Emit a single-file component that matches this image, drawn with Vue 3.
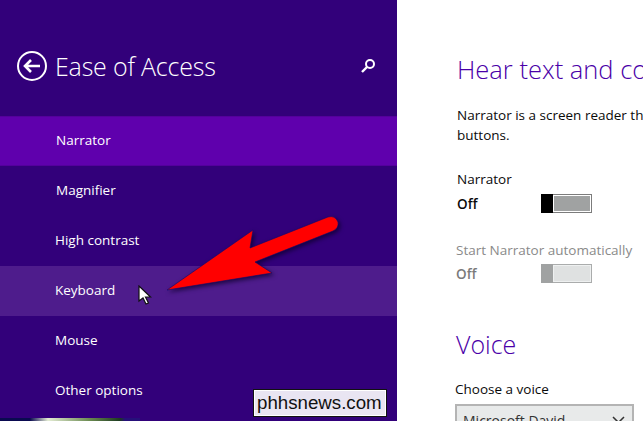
<script setup>
const menu = [
  { label: "Narrator", state: "active", shift: 1 },
  { label: "Magnifier", state: "", shift: 1 },
  { label: "High contrast", state: "", shift: 0 },
  { label: "Keyboard", state: "hover", shift: 0 },
  { label: "Mouse", state: "", shift: 0 },
  { label: "Other options", state: "", shift: 0 },
];
</script>

<template>
  <div class="screen">
    <aside class="sidebar">
      <header class="side-head">
        <svg class="back" width="32" height="32" viewBox="0 0 32 32">
          <circle cx="16" cy="16" r="14" fill="none" stroke="#fff" stroke-width="2" />
          <path d="M24 16H9M15 10l-6 6 6 6" fill="none" stroke="#fff" stroke-width="2.6" />
        </svg>
        <h1>Ease of Access</h1>
        <svg class="search" width="16" height="16" viewBox="0 0 16 16">
          <circle cx="10" cy="6" r="4" fill="none" stroke="#fff" stroke-width="2" />
          <path d="M7 9l-5 5" stroke="#fff" stroke-width="2.4" />
        </svg>
      </header>
      <nav class="menu">
        <div v-for="item in menu" :key="item.label" class="menu-item" :class="item.state">
          <span :class="{ nudge: item.shift }">{{ item.label }}</span>
        </div>
      </nav>
      <div class="taskbar-edge"></div>
    </aside>

    <main class="content">
      <h2 class="title">Hear text and controls read aloud</h2>
      <p class="desc">Narrator is a screen reader that reads all the text on the screen aloud and describes<br />buttons.</p>

      <div class="setting">
        <div class="setting-name">Narrator</div>
        <div class="setting-row">
          <b>Off</b>
          <span class="toggle"><i></i><u></u></span>
        </div>
      </div>

      <div class="setting disabled">
        <div class="setting-name">Start Narrator automatically</div>
        <div class="setting-row">
          <b>Off</b>
          <span class="toggle"><i></i><u></u></span>
        </div>
      </div>

      <h2 class="title voice">Voice</h2>
      <div class="setting-name choose">Choose a voice</div>
      <div class="select">
        <span>Microsoft David</span>
        <svg width="13" height="8" viewBox="0 0 13 8">
          <path d="M1 1l5.500 5.500 5.500-5.500" fill="none" stroke="#333" stroke-width="1.5" />
        </svg>
      </div>
    </main>

    <svg class="arrow" width="220" height="110" viewBox="160 210 220 110">
      <path d="M328 217L250 248L253 230L167 290L272 273L255 262L333 231Q339 228 338 222Q335 215 328 217Z" fill="#ff0000" stroke="#0a0a70" stroke-width="0.6" />
    </svg>
    <svg class="cursor" width="14" height="22" viewBox="0 0 14 22">
      <path d="M1 1v15l4-3 3 6 2.500-1-3-6h5z" fill="#fff" stroke="#111" stroke-width="1.2" />
    </svg>
    <div class="watermark">phhsnews.com</div>
  </div>
</template>

<style scoped>
.screen {
  position: relative;
  display: flex;
  width: 643px;
  height: 421px;
  overflow: hidden;
  background: #fff;
  font-family: "Open Sans", "Noto Sans", sans-serif;
}

.sidebar {
  position: relative;
  width: 397px;
  flex: none;
  background: #32007a;
  color: #fff;
}

.side-head {
  display: flex;
  align-items: center;
  height: 116px;
  padding: 15px 0 0 16px;
  box-sizing: border-box;
}

.back {
  flex: none;
  margin-right: 7px;
}

.side-head h1 {
  margin: 0;
  font-size: 25px;
  font-weight: 300;
  letter-spacing: -0.2px;
  flex: 1;
}

.search {
  margin-right: 21px;
}

.menu-item {
  display: flex;
  align-items: center;
  height: 50px;
  padding: 0 0 2px 55px;
  box-sizing: border-box;
  font-size: 13.5px;
}

.nudge {
  margin-left: 1px;
}

.menu-item.active {
  background: #5f00ad;
  border-top: 1px solid #54009c;
  border-bottom: 1px solid #54009c;
}

.menu-item.hover {
  background: #4e1c8c;
}

.taskbar-edge {
  position: absolute;
  left: 0;
  bottom: 0;
  width: 140px;
  height: 3px;
  background: linear-gradient(90deg, #0a0a50 0, #0a0a50 30px, #e4ecd4 48px, #6a8a50 90px, #1c3a20 120px, #26107a 125px);
}

.content {
  flex: 1;
  padding: 51px 0 0 60px;
  min-width: 0;
  white-space: nowrap;
  color: #0a0a0a;
}

.title {
  margin: 0;
  font-size: 25.5px;
  line-height: 36px;
  font-weight: 300;
  color: #4a00a8;
}

.desc {
  margin: 18px 0 0;
  font-size: 13.5px;
  line-height: 20px;
}

.setting {
  margin-top: 24px;
}

.setting-name {
  font-size: 13.5px;
  line-height: 20px;
}

.setting-row {
  display: flex;
  align-items: center;
  margin-top: 5px;
  font-size: 13.5px;
}

.setting-row b {
  width: 84px;
  font-weight: 600;
}

.toggle {
  display: flex;
  width: 51px;
  height: 19px;
  box-sizing: border-box;
  background: #7c7c7c;
}

.toggle i {
  flex: none;
  width: 12px;
  background: #000;
}

.toggle u {
  flex: 1;
  margin: 1px 1px 1px 0;
  border: 1px solid #fff;
  background: #a0a2a2;
}

.disabled {
  margin-top: 27px;
  margin-left: -1px;
  color: #8a8a8a;
}

.disabled .setting-row {
  margin-top: 4px;
}

.disabled .setting-row b {
  width: 85px;
  color: #7a7a7a;
}

.disabled .toggle {
  background: #aaacac;
}

.disabled .toggle i {
  background: #a0a2a2;
}

.disabled .toggle u {
  background: #dfe1e1;
  border-color: #eef0f0;
}

.voice {
  margin-top: 43px;
  margin-left: -1px;
  font-size: 25px;
}

.choose {
  margin-top: 17px;
  margin-left: -2px;
}

.select {
  display: flex;
  align-items: center;
  justify-content: space-between;
  width: 179px;
  height: 32px;
  margin-top: 5px;
  margin-left: -2px;
  padding: 0 7px 0 6px;
  box-sizing: border-box;
  background: #e8eaea;
  border: 2px solid #b4b4b4;
  font-size: 14px;
  color: #333;
}

.arrow {
  position: absolute;
  left: 160px;
  top: 210px;
  filter: drop-shadow(2px 2px 2px rgba(10, 0, 40, 0.7));
}

.cursor {
  position: absolute;
  left: 138px;
  top: 285px;
}

.watermark {
  position: absolute;
  left: 253px;
  top: 389px;
  width: 134px;
  height: 28px;
  box-sizing: border-box;
  padding-left: 3px;
  background: #e9e5f2;
  border: 1px solid #111;
  box-shadow: inset 0 0 0 1px #fff;
  color: #111;
  font-family: "Liberation Sans", Arial, sans-serif;
  font-size: 18.7px;
  line-height: 26px;
}
</style>

<style>
body {
  margin: 0;
}
</style>
